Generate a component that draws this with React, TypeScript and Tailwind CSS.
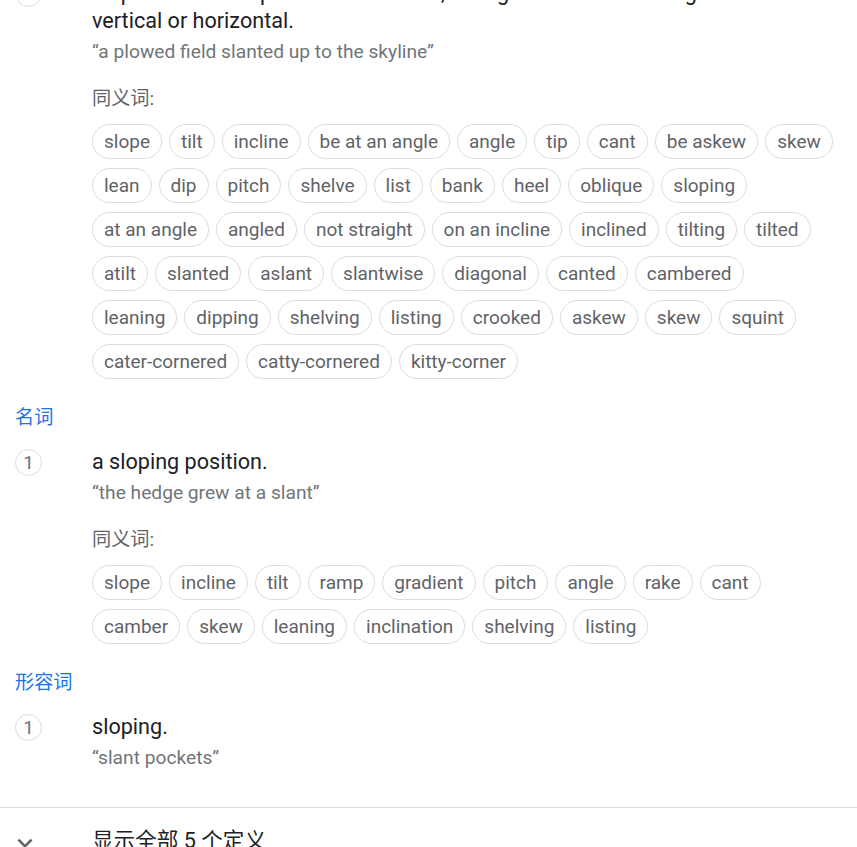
const LATIN = "font-['Roboto','Noto_Sans_CJK_SC',sans-serif]";

type Sense = {
  definition: string;
  example: string;
  synonyms?: string[];
};

type Group = {
  pos?: string;
  senses: Sense[];
};

const groups: Group[] = [
  {
    senses: [
      {
        definition:
          'slope or lean in a particular direction; diverge or cause to diverge from the vertical or horizontal.',
        example: '“a plowed field slanted up to the skyline”',
        synonyms: [
          'slope', 'tilt', 'incline', 'be at an angle', 'angle', 'tip', 'cant', 'be askew', 'skew',
          'lean', 'dip', 'pitch', 'shelve', 'list', 'bank', 'heel', 'oblique', 'sloping',
          'at an angle', 'angled', 'not straight', 'on an incline', 'inclined', 'tilting', 'tilted',
          'atilt', 'slanted', 'aslant', 'slantwise', 'diagonal', 'canted', 'cambered',
          'leaning', 'dipping', 'shelving', 'listing', 'crooked', 'askew', 'skew', 'squint',
          'cater-cornered', 'catty-cornered', 'kitty-corner',
        ],
      },
    ],
  },
  {
    pos: '名词',
    senses: [
      {
        definition: 'a sloping position.',
        example: '“the hedge grew at a slant”',
        synonyms: [
          'slope', 'incline', 'tilt', 'ramp', 'gradient', 'pitch', 'angle', 'rake', 'cant',
          'camber', 'skew', 'leaning', 'inclination', 'shelving', 'listing',
        ],
      },
    ],
  },
  {
    pos: '形容词',
    senses: [
      {
        definition: 'sloping.',
        example: '“slant pockets”',
      },
    ],
  },
];

const Chip = ({ label }: { label: string }) => (
  <span className="inline-flex h-[35px] items-center rounded-full border border-[#dadce0] px-[11px] text-[19px] leading-none text-[#5f6368]">
    {label}
  </span>
);

const SenseBlock = ({ sense, index }: { sense: Sense; index: number }) => (
  <div className="flex">
    <div className="w-[92px] shrink-0 pl-[15px]">
      <div className="mt-[0.5px] flex h-[27px] w-[27px] items-center justify-center rounded-full border border-[#dadce0] text-[19px] leading-none text-[#70757a]">
        {index}
      </div>
    </div>
    <div className="min-w-0 flex-1 pr-[22px]">
      <div className="text-[21.6px] leading-[28px] text-[#202124]">{sense.definition}</div>
      <div className="mt-[5px] text-[19.2px] leading-[24px] text-[#70757a]">{sense.example}</div>
      {sense.synonyms && (
        <>
          <div className="mt-[23px] text-[19.2px] leading-[24px] text-[#5f6368]">同义词:</div>
          <div className="mt-[13px] flex flex-wrap gap-x-[7px] gap-y-[9px]">
            {sense.synonyms.map((s, i) => (
              <Chip key={i} label={s} />
            ))}
          </div>
        </>
      )}
    </div>
  </div>
);

export default function App() {
  return (
    <div className={`${LATIN} h-[847px] w-[857px] overflow-hidden bg-white`}>
      <div className="-mt-[21px]">
        {groups.map((g, gi) => (
          <div key={gi} className={gi === 0 ? '' : 'mt-[27px]'}>
            {g.pos && (
              <div className="mb-[18px] pl-[15px] text-[19.2px] leading-[24px] text-[#1a73e8]">{g.pos}</div>
            )}
            {g.senses.map((s, si) => (
              <SenseBlock key={si} sense={s} index={si + 1} />
            ))}
          </div>
        ))}
      </div>

      {/* 显示全部 */}
      <div className="mt-[37px] border-t border-[#dadce0]">
        <div className="flex items-start pt-[19px]">
          <div className="w-[92px] shrink-0 pl-[10px] pt-[1px]">
            <svg viewBox="0 0 24 24" className="h-[30px] w-[30px] fill-[#5f6368]">
              <path d="M16.59 8.59L12 13.17 7.41 8.59 6 10l6 6 6-6z" />
            </svg>
          </div>
          <div className="text-[21.6px] leading-[28px] text-[#202124]">显示全部 5 个定义</div>
        </div>
      </div>
    </div>
  );
}
